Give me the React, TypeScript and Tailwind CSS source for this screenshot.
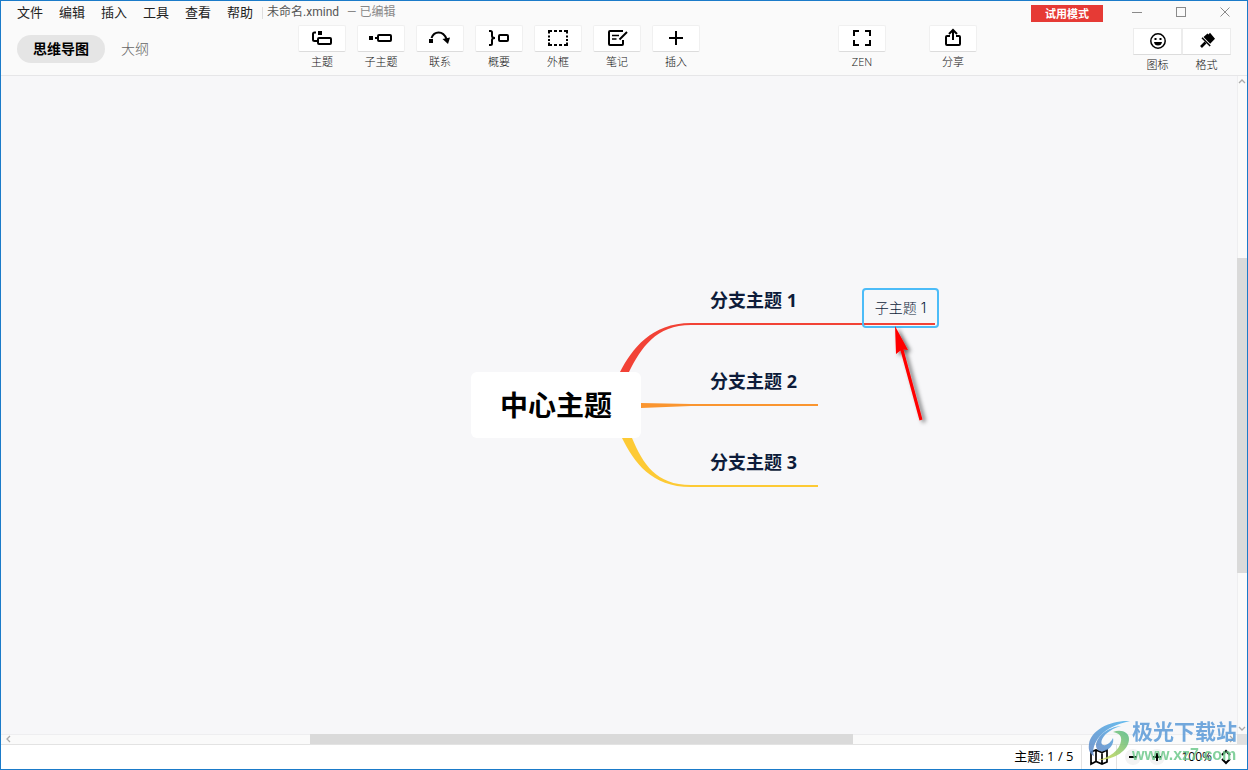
import type { ReactNode } from 'react'

const menus = ['文件', '编辑', '插入', '工具', '查看', '帮助']

const branches = [
  { title: '分支主题 1', pos: 'left-[709px] top-[210px]' },
  { title: '分支主题 2', pos: 'left-[709px] top-[291px]' },
  { title: '分支主题 3', pos: 'left-[709px] top-[372px]' },
]

function Icon({ children }: { children: ReactNode }) {
  return (
    <svg viewBox="0 0 24 24" className="w-6 h-6" fill="none" stroke="black" strokeWidth="2" aria-hidden="true">
      {children}
    </svg>
  )
}

const tools = [
  {
    label: '主题',
    icon: (
      <Icon>
        <path d="M6 6.5H4.500Q3 6.500 3 8V13.500Q3 15 4.500 15H7" />
        <rect x="8" y="5" width="4" height="4" fill="black" stroke="none" />
        <rect x="8" y="12" width="13" height="6" rx="1" />
      </Icon>
    ),
  },
  {
    label: '子主题',
    icon: (
      <Icon>
        <rect x="0" y="10" width="4" height="4" fill="black" stroke="none" />
        <path d="M6 12H8" />
        <rect x="9" y="9" width="13" height="6" rx="1" />
      </Icon>
    ),
  },
  {
    label: '联系',
    icon: (
      <Icon>
        <rect x="1" y="13" width="4" height="4" fill="black" stroke="none" />
        <path d="M3.5 12C6 5 15 4 18.5 13" />
        <path d="M14.5 13L22 11.5L20 18Z" fill="black" stroke="none" />
      </Icon>
    ),
  },
  {
    label: '概要',
    icon: (
      <Icon>
        <path d="M2 5H3.500Q5 5 5 6.500V10Q5 12 8 12Q5 12 5 14V17.500Q5 19 3.500 19H2" />
        <rect x="12" y="9" width="9" height="6" rx="1" />
      </Icon>
    ),
  },
  {
    label: '外框',
    icon: (
      <Icon>
        <path d="M3 7.5V5H6M8 5H11M13 5H16M18 5H21V7.5M21 9.500V11.500M21 13V15M21 16.5V19H18M16 19H13M11 19H8M6 19H3V16.5M3 15V13M3 11.500V9.5" />
      </Icon>
    ),
  },
  {
    label: '笔记',
    icon: (
      <Icon>
        <path d="M18 5H5Q4 5 4 6V18Q4 19 5 19H17Q18 19 18 18V14" />
        <path d="M22 6L14.5 13.5" />
        <path d="M7 9.5H14M7 13H11.5" strokeWidth="1.7" />
      </Icon>
    ),
  },
  {
    label: '插入',
    icon: (
      <Icon>
        <path d="M12 5V19M5 12H19" />
      </Icon>
    ),
  },
]

function ToolButton({ label, children }: { label: string; children: ReactNode }) {
  return (
    <button className="flex flex-col items-center w-12 gap-1">
      <span className="flex items-start justify-center w-12 h-[27px] bg-white border border-[#f0f0f0] border-b-[#dcdcdc] rounded-xs">
        {children}
      </span>
      <span className="text-[11px] leading-3 font-light text-[#111]">{label}</span>
    </button>
  )
}

function PanelButton({ label, children }: { label: string; children: ReactNode }) {
  return (
    <button className="flex flex-col items-center w-[49px] gap-1">
      <span className="flex items-start justify-center w-full h-[27px] bg-white border border-[#ececec] border-b-[#dcdcdc]">
        {children}
      </span>
      <span className="text-[11px] leading-3 font-light text-[#111]">{label}</span>
    </button>
  )
}

function Chevron({ d }: { d: string }) {
  return (
    <svg viewBox="0 0 10 10" className="w-[10px] h-[10px] shrink-0" fill="none" stroke="#aaa" strokeWidth="1.3" aria-hidden="true">
      <path d={d} />
    </svg>
  )
}

function Header() {
  return (
    <header className="bg-[#fafafa] border-b border-[#e6e6e8]">
      <div className="flex items-center h-6">
        <nav className="flex gap-4 pl-4 pb-0.5 text-[13px] text-[#222]">
          {menus.map(m => (
            <button key={m} className="leading-5">{m}</button>
          ))}
        </nav>
        <span className="w-px h-3 ml-[9px] mr-1 bg-[#dedede]" />
        <span className="pb-0.5 font-['Roboto','Noto_Sans_CJK_SC',sans-serif] text-xs text-[#555]">未命名.xmind</span>
        <span className="ml-2 pb-0.5 font-['Roboto','Noto_Sans_CJK_SC',sans-serif] text-xs text-[#888]">— 已编辑</span>
        <span className="ml-auto mr-3 w-[72px] h-[17px] bg-[#e63a35] text-white text-[11px] leading-[17px] font-bold text-center">
          试用模式
        </span>
        <div className="flex">
          <button aria-label="最小化" className="flex justify-center w-11">
            <svg viewBox="0 0 12 12" className="w-3 h-3" fill="none" stroke="#8a8a8a"><path d="M1 5.5H11" /></svg>
          </button>
          <button aria-label="最大化" className="flex justify-center w-11">
            <svg viewBox="0 0 12 12" className="w-3 h-3" fill="none" stroke="#8a8a8a"><rect x="1.5" y="0.5" width="9" height="9" /></svg>
          </button>
          <button aria-label="关闭" className="flex justify-center w-11">
            <svg viewBox="0 0 12 12" className="w-3 h-3" fill="none" stroke="#8a8a8a"><path d="M1.500 0.500L10.500 9.500M10.500 0.500L1.500 9.500" /></svg>
          </button>
        </div>
      </div>

      <div className="flex h-[50px]">
        <div className="flex flex-1 items-start gap-4 pl-4 pt-[10px] mr-[27px]">
          <button className="h-7 px-4 rounded-full bg-[#e5e5e5] text-sm font-bold text-black">思维导图</button>
          <button className="h-7 text-sm font-light text-[#666]">大纲</button>
        </div>

        <div className="flex items-start gap-[11px]">
          {tools.map(t => (
            <ToolButton key={t.label} label={t.label}>{t.icon}</ToolButton>
          ))}
        </div>
        <div className="flex items-start gap-[43px] ml-[138px]">
          <ToolButton label="ZEN">
            <Icon>
              <path d="M4 10V5H9M15 5H20V10M20 14V19H15M9 19H4V14" />
            </Icon>
          </ToolButton>
          <ToolButton label="分享">
            <Icon>
              <path d="M9 10H6Q5 10 5 11V18Q5 19 6 19H18Q19 19 19 18V11Q19 10 18 10H15" />
              <path d="M12 14V4.5M8 8L12 4L16 8" />
            </Icon>
          </ToolButton>
        </div>

        <div className="flex flex-1 items-start justify-end pr-4 pt-[3px]">
          <PanelButton label="图标">
            <Icon>
              <circle cx="12" cy="12" r="7.2" strokeWidth="1.5" />
              <path d="M8 13H16Q15.500 16.500 12 16.500Q8.500 16.500 8 13Z" fill="black" stroke="none" />
              <rect x="8.500" y="9" width="2" height="2" fill="black" stroke="none" />
              <rect x="13.500" y="9" width="2" height="2" fill="black" stroke="none" />
            </Icon>
          </PanelButton>
          <PanelButton label="格式">
            <Icon>
              <path d="M8.500 8L12.500 4.500L13.500 5.500L15 3.800L20 9.800L15.200 14.800Z" fill="black" stroke="none" />
              <path d="M7 8.800L15.200 17" strokeWidth="1.500" />
              <path d="M10.500 13.500L6 18" strokeWidth="2.600" />
            </Icon>
          </PanelButton>
        </div>
      </div>
    </header>
  )
}

function MindMap() {
  return (
    <main className="relative flex-1 overflow-hidden bg-[#f7f7f9]">
      <svg className="absolute inset-0 w-full h-full" aria-hidden="true">
        <path d="M619 296C631 273 650 247 690 247H934V249H690C655 249 640 272 628 296Z" fill="#f24236" />
        <path d="M640 327L690 328H817V330H690L640 332Z" fill="#fa9530" />
        <path d="M621 362C633 386 650 411 690 411H817V409H690C655 409 642 388 631 362Z" fill="#fdca35" />
      </svg>

      <div className="absolute left-[470px] top-[296px] w-[170px] h-[66px] flex items-center justify-center rounded-md bg-white text-[28px] font-bold text-black">
        中心主题
      </div>
      {branches.map(b => (
        <div key={b.title} className={`absolute ${b.pos} text-lg leading-7 font-bold text-[#0d1c3a]`}>{b.title}</div>
      ))}
      <div className="absolute left-[861px] top-[212px] w-[77px] h-10 flex items-center justify-center rounded-sm border-2 border-[#4cbcf8] font-['Inter','Noto_Sans_CJK_SC',sans-serif] text-sm font-light text-[#0d1c3a]">
        子主题 1
      </div>

      <svg viewBox="0 0 50 110" className="absolute left-[884px] top-[246px] w-[50px] h-[110px]" aria-hidden="true">
        <defs>
          <filter id="arrowShadow" x="-50%" y="-20%" width="220%" height="140%">
            <feDropShadow dx="3" dy="2" stdDeviation="2" floodOpacity="0.6" />
          </filter>
        </defs>
        <g filter="url(#arrowShadow)" fill="red">
          <path d="M10 4L23 28L18.500 27.500L37.500 97.500L34.500 98.500L15.500 28.500L11 32Z" />
        </g>
      </svg>
    </main>
  )
}

function Watermark() {
  return (
    <div className="absolute right-[10px] bottom-1 flex items-center pointer-events-none">
      <svg viewBox="0 0 46 44" className="w-[46px] h-11" aria-hidden="true">
        <defs>
          <linearGradient id="wmBlue" x1="0" y1="1" x2="1" y2="0">
            <stop offset="0" stopColor="#5f86c4" />
            <stop offset="1" stopColor="#4fb4ee" />
          </linearGradient>
          <linearGradient id="wmGreen" x1="0" y1="1" x2="1" y2="0">
            <stop offset="0" stopColor="#d8dc4c" />
            <stop offset="1" stopColor="#4fb887" />
          </linearGradient>
        </defs>
        <g opacity="0.85">
          <path d="M44 2C24 1 5 11 3 25C2 31 4 35 8 37C6 31 8 24 14 17C21 9 31 5 44 2Z" fill="url(#wmBlue)" />
          <path d="M35 7C22 8 11 17 10 26C10 32 15 34 21 31C26 28 28 23 27 19C25 23 21 27 17 26C13 24 17 16 24 12C28 9 32 8 35 7Z" fill="url(#wmBlue)" />
          <path d="M27 13C35 10 43 13 43 20C43 31 29 41 12 41C23 39 34 31 35 22C36 17 33 14 27 13Z" fill="url(#wmGreen)" />
        </g>
      </svg>
      <div className="flex flex-col opacity-85">
        <span className="text-[21px] leading-7 font-bold text-[#5a9ad8]">极光下载站</span>
        <span className="font-['Liberation_Sans'] text-base leading-5 font-bold text-[#6fc98c]">www.xz7.com</span>
      </div>
    </div>
  )
}

function StatusBar() {
  return (
    <footer className="flex items-center justify-end h-[25px] border-t border-[#e3e3e3] bg-white text-[13px] text-black">
      <span className="pr-2">主题: 1 / 5</span>
      <button aria-label="导航图" className="flex items-center justify-center w-9 h-full border-x border-[#e3e3e3]">
        <svg viewBox="0 0 20 18" className="w-5 h-[18px]" fill="none" stroke="black" strokeWidth="1.7">
          <path d="M2 4L7 2L13 4.500L18 2V14L13 16L7 13.500L2 16ZM7 2V14M13 4V16" />
        </svg>
      </button>
      <div className="flex items-center gap-2 pl-2">
        <button aria-label="缩小" className="flex items-center justify-center w-4 h-4 rounded-full bg-[#f3f3f3]">
          <svg viewBox="0 0 10 10" className="w-[10px] h-[10px]" stroke="black" strokeWidth="2"><path d="M1 5H9" /></svg>
        </button>
        <button aria-label="放大" className="flex items-center justify-center w-4 h-4 rounded-full bg-[#f3f3f3]">
          <svg viewBox="0 0 10 10" className="w-[10px] h-[10px]" stroke="black" strokeWidth="2"><path d="M1 5H9M5 1V9" /></svg>
        </button>
      </div>
      <button className="flex items-center gap-2 pl-4 pr-[15px] text-xs">
        100%
        <svg viewBox="0 0 12 16" className="w-3 h-4" fill="none" stroke="black" strokeWidth="2" aria-hidden="true">
          <path d="M2 6L6 2L10 6M2 10L6 14L10 10" />
        </svg>
      </button>
    </footer>
  )
}

export default function App() {
  return (
    <div className="relative flex flex-col min-h-screen border border-[#1b7bc9] font-['Open_Sans','Noto_Sans_CJK_SC',sans-serif]">
      <Header />
      <div className="flex flex-1">
        <MindMap />
        <div className="flex flex-col items-center w-[10px] bg-[#fafafa] shadow-[inset_1px_0_0_#eeeef0]">
          <Chevron d="M2 7L5 4L8 7" />
          <div className="grow-172" />
          <div className="w-full grow-315 bg-[#dadada]" />
          <div className="grow-151" />
          <Chevron d="M2 3L5 6L8 3" />
        </div>
      </div>
      <div className="flex items-center h-[10px] pl-0.5 bg-[#fafafa] shadow-[inset_0_1px_0_#eeeef0]">
        <Chevron d="M7 2L4 5L7 8" />
        <div className="grow-297" />
        <div className="h-full grow-543 bg-[#dadada]" />
        <div className="grow-374" />
        <Chevron d="M3 2L6 5L3 8" />
        <div className="w-[10px] h-full bg-[#e0e0e0]" />
      </div>
      <StatusBar />
      <Watermark />
    </div>
  )
}
